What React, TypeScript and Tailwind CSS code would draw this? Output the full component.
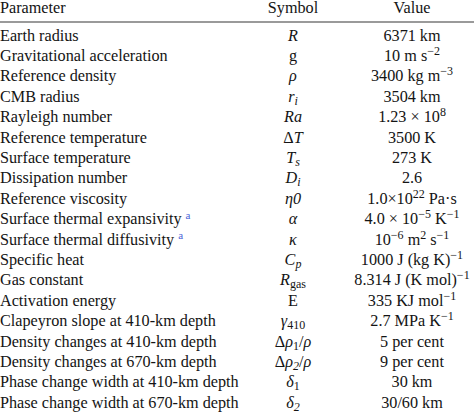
import type { ReactNode } from "react";

interface Row {
  name: ReactNode;
  symbol: ReactNode;
  value: ReactNode;
}

function Sup({ children }: { children: ReactNode }) {
  return <sup className="text-[12px]">{children}</sup>;
}

function Sub({ children }: { children: ReactNode }) {
  return <sub className="text-[12px]">{children}</sub>;
}

function Note() {
  return <sup className="ml-[4px] text-[11px] text-[#4a63d8]">a</sup>;
}

const rows: Row[] = [
  { name: "Earth radius", symbol: <i>R</i>, value: "6371 km" },
  {
    name: "Gravitational acceleration",
    symbol: "g",
    value: (
      <>
        10 m s<Sup>−2</Sup>
      </>
    ),
  },
  {
    name: "Reference density",
    symbol: <i>ρ</i>,
    value: (
      <>
        3400 kg m<Sup>−3</Sup>
      </>
    ),
  },
  {
    name: "CMB radius",
    symbol: (
      <>
        <i>r</i>
        <Sub>
          <i>i</i>
        </Sub>
      </>
    ),
    value: "3504 km",
  },
  {
    name: "Rayleigh number",
    symbol: <i>Ra</i>,
    value: (
      <>
        1.23 × 10<Sup>8</Sup>
      </>
    ),
  },
  {
    name: "Reference temperature",
    symbol: (
      <>
        Δ<i>T</i>
      </>
    ),
    value: "3500 K",
  },
  {
    name: "Surface temperature",
    symbol: (
      <>
        <i>T</i>
        <Sub>
          <i>s</i>
        </Sub>
      </>
    ),
    value: "273 K",
  },
  {
    name: "Dissipation number",
    symbol: (
      <>
        <i>D</i>
        <Sub>
          <i>i</i>
        </Sub>
      </>
    ),
    value: "2.6",
  },
  {
    name: "Reference viscosity",
    symbol: <i>η0</i>,
    value: (
      <>
        1.0×10<Sup>22</Sup> Pa·s
      </>
    ),
  },
  {
    name: (
      <>
        Surface thermal expansivity
        <Note />
      </>
    ),
    symbol: <i>α</i>,
    value: (
      <>
        4.0 × 10<Sup>−5</Sup> K<Sup>−1</Sup>
      </>
    ),
  },
  {
    name: (
      <>
        Surface thermal diffusivity
        <Note />
      </>
    ),
    symbol: <i>κ</i>,
    value: (
      <>
        10<Sup>−6</Sup> m<Sup>2</Sup> s<Sup>−1</Sup>
      </>
    ),
  },
  {
    name: "Specific heat",
    symbol: (
      <>
        <i>C</i>
        <Sub>
          <i>p</i>
        </Sub>
      </>
    ),
    value: (
      <>
        1000 J (kg K)<Sup>−1</Sup>
      </>
    ),
  },
  {
    name: "Gas constant",
    symbol: (
      <>
        <i>R</i>
        <Sub>gas</Sub>
      </>
    ),
    value: (
      <>
        8.314 J (K mol)<Sup>−1</Sup>
      </>
    ),
  },
  {
    name: "Activation energy",
    symbol: "E",
    value: (
      <>
        335 KJ mol<Sup>−1</Sup>
      </>
    ),
  },
  {
    name: "Clapeyron slope at 410-km depth",
    symbol: (
      <>
        <i>γ</i>
        <Sub>410</Sub>
      </>
    ),
    value: (
      <>
        2.7 MPa K<Sup>−1</Sup>
      </>
    ),
  },
  {
    name: "Density changes at 410-km depth",
    symbol: (
      <>
        Δ<i>ρ</i>
        <Sub>1</Sub>/<i>ρ</i>
      </>
    ),
    value: "5 per cent",
  },
  {
    name: "Density changes at 670-km depth",
    symbol: (
      <>
        Δ<i>ρ</i>
        <Sub>
          <i>2</i>
        </Sub>
        /<i>ρ</i>
      </>
    ),
    value: "9 per cent",
  },
  {
    name: "Phase change width at 410-km depth",
    symbol: (
      <>
        <i>δ</i>
        <Sub>1</Sub>
      </>
    ),
    value: "30 km",
  },
  {
    name: "Phase change width at 670-km depth",
    symbol: (
      <>
        <i>δ</i>
        <Sub>
          <i>2</i>
        </Sub>
      </>
    ),
    value: "30/60 km",
  },
];

export default function App() {
  return (
    <div className="h-[412px] w-[474px] overflow-hidden bg-white font-['Liberation_Serif',serif] text-[16.2px] text-[#141414]">
      <div className="grid h-[16px] w-[478px] grid-cols-[240px_106px_132px] leading-[17px]">
        <div>Parameter</div>
        <div className="text-center">Symbol</div>
        <div className="text-center">Value</div>
      </div>
      <div className="mt-[5px] h-[2px] w-full bg-[#9a9a9a]" />
      <div className="pt-[2.7px]">
        {rows.map((row, i) => (
          <div
            key={i}
            className="grid h-[20.4px] w-[478px] grid-cols-[240px_106px_132px] whitespace-nowrap leading-[20.4px]"
          >
            <div>{row.name}</div>
            <div className="text-center">{row.symbol}</div>
            <div className="text-center">{row.value}</div>
          </div>
        ))}
      </div>
    </div>
  );
}
